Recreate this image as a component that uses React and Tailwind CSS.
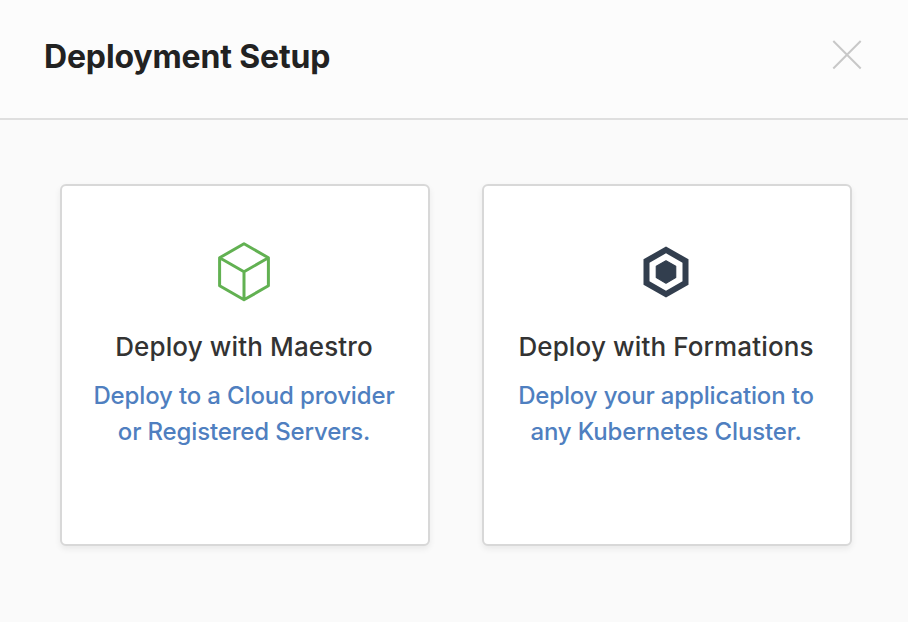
const cards = [
  {
    title: "Deploy with Maestro",
    lines: ["Deploy to a Cloud provider", "or Registered Servers."],
    icon: (
      <svg width="54" height="60" viewBox="0 0 54 60" fill="none" stroke="#62b152" strokeWidth="3" strokeLinejoin="round">
        <path d="M27 1.7 51.4 15.8V43.8L27 57.8 2.6 43.8V15.8ZM2.6 15.8 27 29.7 51.4 15.8M27 29.7V57.8" />
      </svg>
    ),
  },
  {
    title: "Deploy with Formations",
    lines: ["Deploy your application to", "any Kubernetes Cluster."],
    icon: (
      <svg width="54" height="60" viewBox="0 0 54 60" fill="none" strokeLinejoin="round">
        <path d="M27 4.4 49.5 17.3V42.7L27 55.4 4.5 42.7V17.3ZM27 11.3 10.5 20.8V39.3L27 48.8 43.5 39.3V20.8Z" fill="#323e4e" fillRule="evenodd" />
        <path d="M27 18.8 36.7 24.3V35.6L27 41.2 17.3 35.6V24.3Z" fill="#323e4e" stroke="#323e4e" strokeWidth="1.2" />
      </svg>
    ),
  },
];

export default function App() {
  return (
    <div className="flex h-[622px] w-[908px] flex-col bg-[#fafafa] font-['Inter',sans-serif]">
      <header className="flex h-[120px] items-start justify-between border-b-2 border-[#dfdfdf] bg-[#fcfcfc] pt-9 pr-[46px] pl-11">
        <h1 className="text-[32px] leading-[42px] font-bold tracking-[-0.15px] whitespace-nowrap text-[#222]">Deployment Setup</h1>
        <button aria-label="Close" className="mt-1">
          <svg width="30" height="30" viewBox="0 0 30 30" stroke="#c8c8c8" strokeWidth="2">
            <path d="M1.3 1 28.7 28.5M28.7 1 1.3 28.5" />
          </svg>
        </button>
      </header>
      <main className="flex gap-[52px] pt-16 pl-[60px]">
        {cards.map((card) => (
          <section key={card.title} className="flex h-[362px] w-[370px] shrink-0 flex-col items-center rounded-md border-2 border-[#d8d8d8] bg-white pt-14 pr-0.5 shadow-[0_3px_6px_rgba(0,0,0,0.07)]">
            {card.icon}
            <h2 className="mt-[27px] text-[26px] leading-9 font-medium tracking-[0.13px] whitespace-nowrap text-[#333]">{card.title}</h2>
            <p className="mt-[13px] text-center text-[24px] leading-9 font-[450] tracking-[-0.15px] whitespace-nowrap text-[#4f7fc0]">
              {card.lines[0]}
              <br />
              {card.lines[1]}
            </p>
          </section>
        ))}
      </main>
    </div>
  );
}
